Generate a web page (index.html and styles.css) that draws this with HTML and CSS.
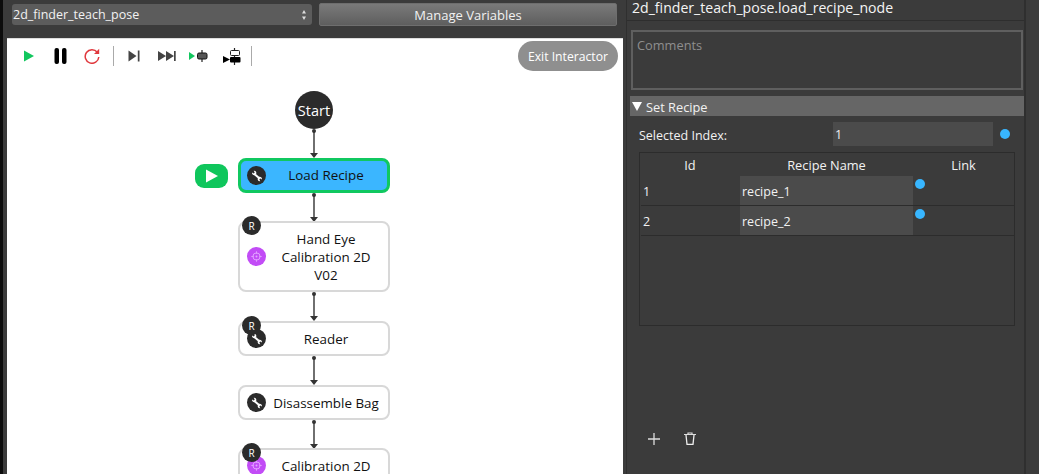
FILE: index.html
```html
<!DOCTYPE html>
<html lang="en">
<head>
  <meta charset="UTF-8" />
  <title>2d_finder_teach_pose</title>
  <link rel="stylesheet" href="styles.css">
</head>
<body>
<svg class="defs" width="0" height="0">
  <symbol id="wrench" viewBox="0 0 14 14">
    <path d="M5 5.500L9 9" stroke="#fff" stroke-width="2" fill="none"/>
    <path d="M2 3.500L3.800 4.500 4.700 3.500 3.700 1.800C5.300 1.500 6.800 2.800 6.200 4.800L4.800 6.300C3.200 6.600 1.800 5.300 2 3.500z" fill="#fff"/>
    <path d="M12 10.500L10.200 9.500 9.300 10.500 10.300 12.200C8.700 12.500 7.200 11.200 7.800 9.200L9.200 7.700C10.800 7.400 12.200 8.700 12 10.500z" fill="#fff"/>
  </symbol>
  <symbol id="target" viewBox="0 0 20 20">
    <circle cx="10" cy="10" r="4.800" stroke="#e3a6ff" stroke-width="1.300" fill="none"/>
    <circle cx="10" cy="10" r="1.300" fill="#e3a6ff"/>
    <path d="M10 3v3.500M10 13.500V17M3 10h3.500M13.500 10H17" stroke="#e3a6ff" stroke-width="1.100"/>
  </symbol>
  <symbol id="link" viewBox="0 0 10 29">
    <circle cx="5" cy="2" r="2" fill="#333"/>
    <path d="M5 2V25" stroke="#333" stroke-width="1.400"/>
    <path d="M1 24H9L5 29z" fill="#333"/>
  </symbol>
</svg>

<div id="app">
  <div class="left">
    <div class="topbar">
      <div class="select">
        <span>2d_finder_teach_pose</span>
        <svg width="4" height="10" viewBox="0 0 4 10"><path d="M2 0L4 3.500H0zM2 10L0 6.500H4z" fill="#ddd"/></svg>
      </div>
      <button class="manage">Manage Variables</button>
    </div>

    <div class="canvas">
      <div class="toolbar">
        <svg class="tool t-play" width="12" height="12" viewBox="0 0 12 12"><path d="M1 0.500L11 6 1 11.500z" fill="#12c75e"/></svg>
        <svg class="tool t-pause" width="13" height="16" viewBox="0 0 13 16"><rect x="0.500" width="4.500" height="16" rx="2" fill="#000"/><rect x="8" width="4.500" height="16" rx="2" fill="#000"/></svg>
        <svg class="tool t-reload" width="16" height="16" viewBox="0 0 16 16"><path d="M13.300 4.200A6.800 6.800 0 1 0 14.800 9" stroke="#e0393e" stroke-width="1.500" fill="none"/><path d="M15.200 0.800V6H10z" fill="#e0393e"/></svg>
        <span class="sep"></span>
        <svg class="tool t-step" width="12" height="12" viewBox="0 0 12 12"><path d="M0.500 0.500L8.500 6 0.500 11.500z" fill="#444"/><rect x="9.800" y="0.500" width="1.700" height="11" fill="#444"/></svg>
        <svg class="tool t-ff" width="18" height="12" viewBox="0 0 18 12"><path d="M0 1L8 6 0 11zM8 1L16 6 8 11z" fill="#444"/><rect x="16" y="1" width="1.700" height="10" fill="#444"/></svg>
        <svg class="tool t-into" width="19" height="12" viewBox="0 0 19 12"><path d="M0 2L6 6 0 10z" fill="#12c75e"/><path d="M13 0V12" stroke="#222" stroke-width="1.200"/><rect x="8.500" y="3" width="9.500" height="6" rx="1.500" fill="#555" stroke="#111"/></svg>
        <svg class="tool t-over" width="18" height="17" viewBox="0 0 18 17"><path d="M11.500 0V17" stroke="#222" stroke-width="1.200"/><rect x="7.500" y="2.500" width="9" height="5" rx="1" fill="#fff" stroke="#222"/><path d="M0 8L7 11.500 0 15z" fill="#000"/><rect x="7" y="9" width="10.500" height="5.500" rx="1" fill="#000"/></svg>
        <span class="sep"></span>
      </div>
      <button class="exit">Exit Interactor</button>

      <div class="flow">
        <div class="start">Start</div>
        <svg class="link"><use href="#link"/></svg>

        <div class="node active">
          <span class="run"><svg width="14" height="14" viewBox="0 0 14 14"><path d="M1 0.500L13 7 1 13.500z" fill="#fff"/></svg></span>
          <span class="icon dark"><svg width="14" height="14"><use href="#wrench"/></svg></span>
          <span class="label">Load Recipe</span>
        </div>
        <svg class="link short"><use href="#link"/></svg>

        <div class="node tall">
          <span class="badge">R</span>
          <span class="icon purple"><svg width="15" height="15"><use href="#target"/></svg></span>
          <span class="label">Hand Eye Calibration 2D V02</span>
        </div>
        <svg class="link"><use href="#link"/></svg>

        <div class="node">
          <span class="badge">R</span>
          <span class="icon dark"><svg width="14" height="14"><use href="#wrench"/></svg></span>
          <span class="label">Reader</span>
        </div>
        <svg class="link"><use href="#link"/></svg>

        <div class="node">
          <span class="icon dark"><svg width="14" height="14"><use href="#wrench"/></svg></span>
          <span class="label">Disassemble Bag</span>
        </div>
        <svg class="link short"><use href="#link"/></svg>

        <div class="node">
          <span class="badge">R</span>
          <span class="icon purple"><svg width="15" height="15"><use href="#target"/></svg></span>
          <span class="label">Calibration 2D</span>
        </div>
      </div>
    </div>
  </div>

  <div class="right">
    <div class="inner">
      <div class="title">2d_finder_teach_pose.load_recipe_node</div>
      <div class="comments">Comments</div>
      <div class="section">
        <svg width="10" height="9" viewBox="0 0 10 9"><path d="M0 0H10L5 9z" fill="#fff"/></svg>
        <span class="section-name">Set Recipe</span>
      </div>
      <div class="field">
        <span class="field-label">Selected Index:</span>
        <span class="field-input">1</span>
        <span class="dot"></span>
      </div>
      <div class="table">
        <div class="row head">
          <span class="c-id">Id</span>
          <span class="c-name">Recipe Name</span>
          <span class="c-link">Link</span>
        </div>
        <div class="row item">
          <span class="c-id">1</span>
          <span class="c-name">recipe_1</span>
          <span class="c-link"><span class="dot"></span></span>
        </div>
        <div class="row item">
          <span class="c-id">2</span>
          <span class="c-name">recipe_2</span>
          <span class="c-link"><span class="dot"></span></span>
        </div>
      </div>
      <div class="actions">
        <svg width="12" height="12" viewBox="0 0 12 12"><path d="M6 0V12M0 6H12" stroke="#ddd" stroke-width="1.300"/></svg>
        <svg width="12" height="13" viewBox="0 0 12 13"><path d="M0 2.500H12M4 2.500V1H8V2.500" stroke="#ddd" stroke-width="1.200" fill="none"/><path d="M2 3L3 12.300H9L10 3" stroke="#eee" stroke-width="1.300" fill="none"/></svg>
      </div>
    </div>
  </div>
</div>
</body>
</html>
```

FILE: styles.css
```css
html, body {
  margin: 0;
  height: 474px;
  overflow: hidden;
}

body {
  font-family: "Open Sans", "Noto Sans", sans-serif;
  font-size: 12.5px;
  background-color: #3b3b3b;
  color: #f2f2f2;
}

.defs {
  display: block;
  height: 0;
}

#app {
  display: flex;
  height: 474px;
}

.left {
  width: 623px;
  padding-left: 7px;
  box-sizing: border-box;
  display: flex;
  flex-direction: column;
  background: linear-gradient(to right, #0c0c0c 3px, #3b3b3b 3px);
}

.topbar {
  height: 38px;
  display: flex;
  align-items: flex-start;
  gap: 7px;
  padding: 3px 6px 0 5px;
  box-sizing: border-box;
}

.select {
  width: 300px;
  height: 21px;
  margin-top: 1px;
  padding: 0 6px 0 1px;
  box-sizing: border-box;
  background-color: #5c5c5c;
  border-radius: 3px;
  display: flex;
  justify-content: space-between;
  align-items: center;
}

.manage {
  flex: 1;
  height: 23px;
  padding: 0;
  font: inherit;
  font-size: 13px;
  color: #f2f2f2;
  background: linear-gradient(#7a7a7a, #5e5e5e);
  border: 1px solid #6e6e6e;
  border-radius: 2px;
}

.canvas {
  flex: 1;
  position: relative;
  overflow: hidden;
  background-color: #fff;
  color: #111;
  border-top: 1px solid #ddd;
}

.toolbar {
  display: flex;
  align-items: center;
  height: 33px;
  padding-top: 1px;
  box-sizing: border-box;
}

.tool {
  flex: none;
}

.t-play { margin-left: 16px; }
.t-pause { margin-left: 19px; }
.t-reload { margin-left: 17px; }
.t-step { margin-left: 14px; }
.t-ff { margin-left: 18px; }
.t-into { margin-left: 13px; }
.t-over { margin-left: 15px; }

.sep {
  width: 1px;
  height: 20px;
  margin-left: 13px;
  background-color: #aaa;
}

.t-over + .sep {
  margin-left: 10px;
}

.exit {
  position: absolute;
  top: 2px;
  right: 5px;
  width: 100px;
  height: 30px;
  padding: 0;
  border: none;
  border-radius: 15px;
  background-color: #8f8f8f;
  color: #fff;
  font: inherit;
  font-size: 12.2px;
}

.flow {
  display: flex;
  flex-direction: column;
  align-items: center;
  width: 152px;
  margin: 19px 0 0 231px;
}

.start {
  width: 38px;
  height: 38px;
  border-radius: 50%;
  background-color: #2b2b2b;
  color: #fff;
  font-size: 14.5px;
  display: flex;
  align-items: center;
  justify-content: center;
}

.link {
  display: block;
  width: 10px;
  height: 29px;
  flex: none;
}

.link.short {
  margin-bottom: -1px;
}

.node {
  position: relative;
  width: 152px;
  height: 35px;
  flex: none;
  box-sizing: border-box;
  border: 2px solid #d8d8d8;
  border-radius: 8px;
  background-color: #fff;
  display: flex;
  align-items: center;
  padding: 0 8px 0 7px;
}

.node.tall {
  height: 71px;
}

.node.active {
  background-color: #3bb6ff;
  border: 3px solid #10c860;
  padding-left: 6px;
  padding-right: 7px;
}

.node.active .label {
  padding-bottom: 1px;
}

.label {
  flex: 1;
  text-align: center;
  font-size: 13.4px;
  line-height: 18px;
  padding-left: 6px;
}

.icon {
  width: 19px;
  height: 19px;
  flex: none;
  border-radius: 50%;
  display: flex;
  align-items: center;
  justify-content: center;
}

.icon.dark {
  background-color: #2b2b2b;
}

.icon.purple {
  background-color: #c24cf6;
}

.badge {
  position: absolute;
  top: -7px;
  left: 2px;
  width: 19px;
  height: 19px;
  border-radius: 50%;
  background-color: #2b2b2b;
  color: #fff;
  font-size: 10px;
  display: flex;
  align-items: center;
  justify-content: center;
}

.run {
  position: absolute;
  left: -46px;
  top: 3px;
  width: 33px;
  height: 24px;
  border-radius: 9px;
  background-color: #0fc65c;
  display: flex;
  align-items: center;
  justify-content: center;
}

.right {
  flex: 1;
  padding: 0 13px 0 4px;
  background: linear-gradient(to right, #3b3b3b 3px, #2f2f2f 3px, #2f2f2f 4px, #3b3b3b 4px);
}

.inner {
  height: 100%;
  border-right: 2px solid #2f2f2f;
  padding-left: 3px;
  display: flex;
  flex-direction: column;
  box-sizing: border-box;
}

.title {
  height: 20px;
  margin-left: -3px;
  padding-left: 5px;
  font-size: 14.1px;
  line-height: 16px;
  border-bottom: 1px solid #2e2e2e;
  color: #f5f5f5;
}

.comments {
  height: 60px;
  box-sizing: border-box;
  margin: 9px 1px 0 1px;
  padding: 4px 4px;
  border: 2px solid #5f5f5f;
  color: #8e8e8e;
  font-size: 12.8px;
}

.section {
  height: 20px;
  margin-top: 6px;
  background-color: #666;
  display: flex;
  align-items: center;
  gap: 4px;
  padding-left: 2px;
  font-size: 12.8px;
}

.section-name {
  padding-top: 1px;
}

.field {
  display: flex;
  align-items: center;
  height: 24px;
  margin: 6px 0 0 9px;
}

.field-label {
  width: 194px;
  padding-top: 2px;
}

.field-input {
  width: 160px;
  height: 24px;
  line-height: 26px;
  padding-left: 2px;
  box-sizing: border-box;
  background-color: #4b4b4b;
}

.dot {
  display: block;
  width: 10px;
  height: 10px;
  border-radius: 50%;
  background-color: #38b6ff;
}

.field .dot {
  margin: -1px 0 0 7px;
}

.table {
  width: 376px;
  height: 174px;
  box-sizing: border-box;
  margin: 6px 0 0 9px;
  border: 1px solid #2c2c2c;
}

.row {
  display: grid;
  grid-template-columns: 100px 173px 1fr;
}

.row.head {
  height: 23px;
  line-height: 25px;
  text-align: center;
  font-size: 12.8px;
}

.row.item {
  grid-template-columns: 99px 173px 1fr;
  height: 30px;
  box-sizing: border-box;
  line-height: 28px;
  border-bottom: 1px solid #2c2c2c;
  margin-left: 1px;
}

.row.item > span {
  height: 29px;
  box-sizing: border-box;
  padding-top: 1px;
}

.row.item .c-id,
.row.item .c-name {
  padding-top: 2px;
  padding-left: 2px;
}

.row.item .c-name {
  background-color: #4b4b4b;
}

.row.item .c-link {
  padding-top: 0;
}

.row.item .dot {
  margin: 3px 0 0 2px;
}

.actions {
  display: flex;
  align-items: center;
  gap: 24px;
  margin: 106px 0 0 18px;
}
```
